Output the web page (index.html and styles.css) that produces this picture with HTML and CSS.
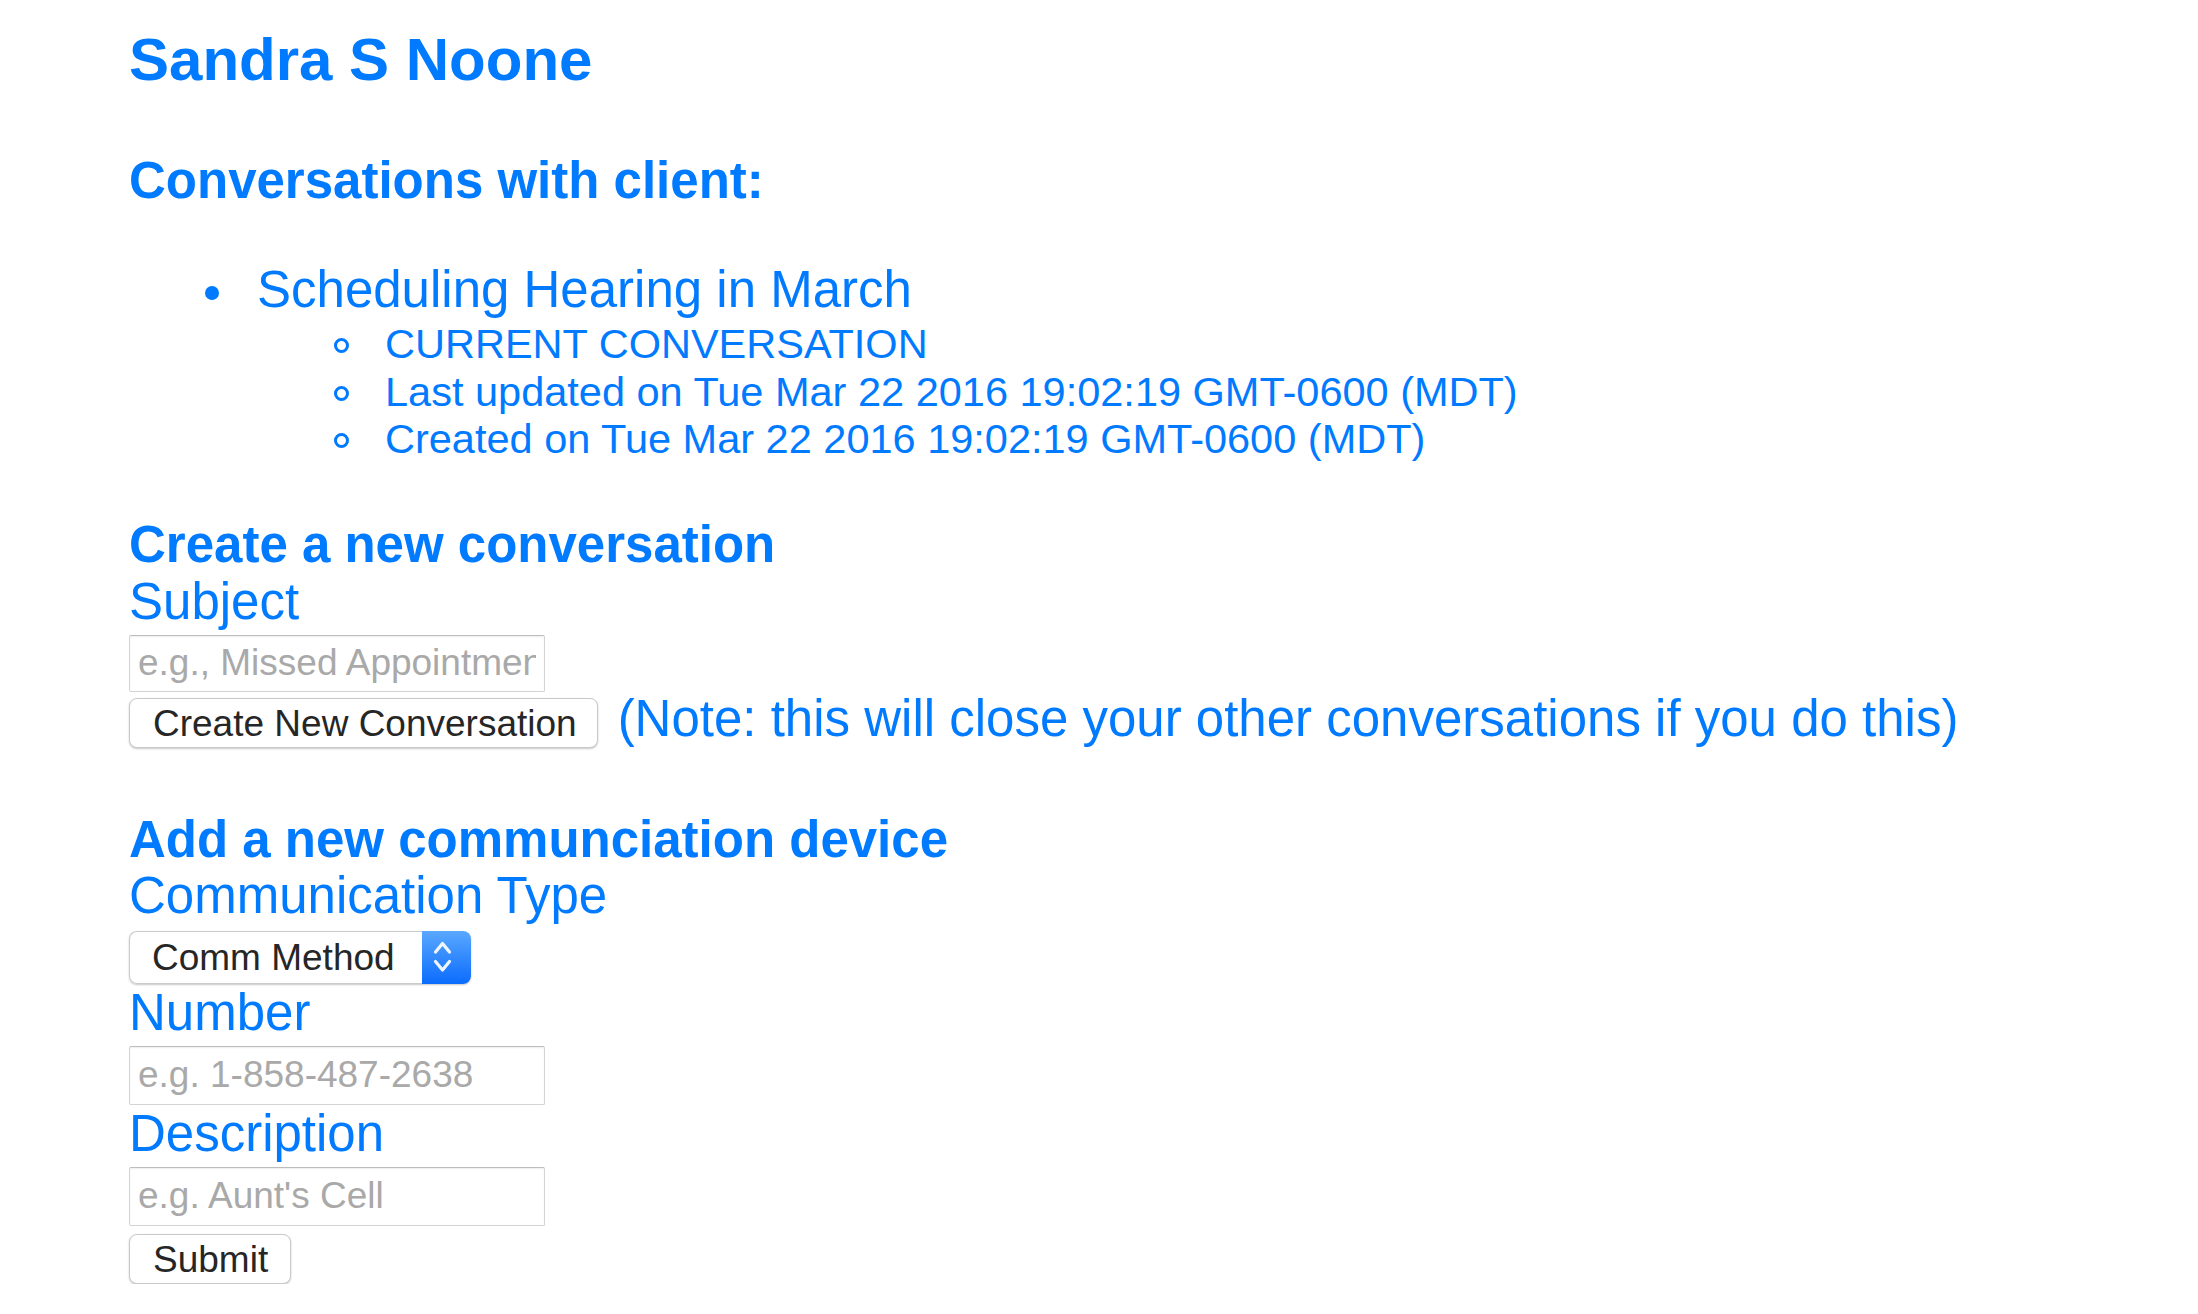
FILE: index.html
```html
<!DOCTYPE html>
<html lang="en">
<head>
<meta charset="utf-8">
<title>Sandra S Noone</title>
<link rel="stylesheet" href="styles.css">
</head>
<body>
<main class="client-page">
  <h1 class="client-name">Sandra S Noone</h1>

  <section class="conversations">
    <h3 class="section-title">Conversations with client:</h3>
    <ul class="conv-list">
      <li class="conv-item">
        <span class="conv-subject">Scheduling Hearing in March</span>
        <ul class="conv-meta">
          <li class="conv-meta-item">CURRENT CONVERSATION</li>
          <li class="conv-meta-item">Last updated on Tue Mar 22 2016 19:02:19 GMT-0600 (MDT)</li>
          <li class="conv-meta-item">Created on Tue Mar 22 2016 19:02:19 GMT-0600 (MDT)</li>
        </ul>
      </li>
    </ul>
  </section>

  <form class="new-conversation">
    <h3 class="section-title">Create a new conversation</h3>
    <label class="field-label" for="subject">Subject</label>
    <input class="text-input" id="subject" type="text" placeholder="e.g., Missed Appointment">
    <div class="action-row">
      <button type="button" class="btn">Create New Conversation</button>
      <span class="note">(Note: this will close your other conversations if you do this)</span>
    </div>
  </form>

  <form class="new-device">
    <h3 class="section-title">Add a new communciation device</h3>
    <label class="field-label" for="comm-type">Communication Type</label>
    <div class="select-box">
      <select class="select" id="comm-type">
        <option>Comm Method</option>
      </select>
      <span class="select-arrow">
        <svg width="49" height="53" viewBox="0 0 49 53" aria-hidden="true">
          <polyline points="13.5,21 20.5,12.5 27.5,21" fill="none" stroke="#fff" stroke-width="3.2" stroke-linecap="round" stroke-linejoin="round" opacity="0.92"/>
          <polyline points="13.5,30.5 20.5,39 27.5,30.5" fill="none" stroke="#fff" stroke-width="3.2" stroke-linecap="round" stroke-linejoin="round" opacity="0.92"/>
        </svg>
      </span>
    </div>
    <label class="field-label" for="number">Number</label>
    <input class="text-input" id="number" type="text" placeholder="e.g. 1-858-487-2638">
    <label class="field-label" for="description">Description</label>
    <input class="text-input" id="description" type="text" placeholder="e.g. Aunt's Cell">
    <button type="button" class="btn btn-submit">Submit</button>
  </form>
</main>
</body>
</html>
```

FILE: styles.css
```css
html, body {
  margin: 0;
  padding: 0;
  background: #ffffff;
}

body {
  font-family: "Liberation Sans", Arial, Helvetica, sans-serif;
  color: #007aff;
}

.client-page {
  padding: 0 0 0 129px;
}

.client-name {
  margin: 25px 0 0;
  font-size: 60px;
  line-height: 69px;
  font-weight: bold;
}

.section-title {
  margin: 54px 0 0;
  font-size: 51px;
  line-height: 55px;
  font-weight: bold;
}

.conversations .section-title {
  margin-top: 59px;
}

.new-device .section-title {
  margin-top: 64px;
}

/* conversation list */
.conv-list {
  list-style: none;
  margin: 54px 0 0;
  padding: 0 0 0 128px;
  font-size: 51px;
  line-height: 55px;
}

.conv-subject::before {
  content: "";
  display: inline-block;
  width: 14px;
  height: 14px;
  border-radius: 50%;
  background: currentColor;
  margin-left: -52px;
  margin-right: 38px;
  vertical-align: 7px;
}

.conv-meta {
  list-style: none;
  margin: 3px 0 0;
  padding: 0 0 0 128px;
  font-size: 41.5px;
  line-height: 47.5px;
}

.conv-meta-item::before {
  content: "";
  display: inline-block;
  box-sizing: border-box;
  width: 15px;
  height: 15px;
  border-radius: 50%;
  border: 3px solid currentColor;
  margin-left: -51px;
  margin-right: 36px;
  vertical-align: 5px;
}

/* form pieces */
.field-label {
  display: block;
  margin: 0;
  font-size: 51px;
  line-height: 55px;
}

.section-title + .field-label {
  margin-top: 2px;
}

.new-device .field-label {
  margin-top: 1px;
}

.text-input {
  display: block;
  box-sizing: border-box;
  margin: 6px 0 0;
  width: 416px;
  height: 57px;
  padding: 0 8px;
  border: 1px solid #d3d3d3;
  border-top-color: #bdbdbd;
  border-radius: 2px;
  box-shadow: inset 0 1px 2px rgba(0, 0, 0, 0.07);
  background: #fff;
  font-family: "Liberation Sans", Arial, sans-serif;
  font-size: 37px;
  color: #222;
  outline: none;
}

.new-device .text-input {
  height: 59px;
}

.text-input::placeholder {
  color: #a9a9a9;
  opacity: 1;
}

.action-row {
  display: flex;
  align-items: baseline;
  gap: 20px;
  margin-top: -1px;
}

.note {
  display: block;
  font-size: 51px;
  line-height: 55px;
  white-space: nowrap;
}

.btn {
  box-sizing: border-box;
  height: 50px;
  margin: 0;
  padding: 4px 20px 2px 23px;
  border: 1px solid #c9c9c9;
  border-radius: 8px;
  background: #ffffff;
  box-shadow: 0 1px 2px rgba(0, 0, 0, 0.22);
  font-family: "Liberation Sans", Arial, sans-serif;
  font-size: 37px;
  line-height: 42px;
  color: #262626;
  white-space: nowrap;
}

.btn-submit {
  display: block;
  margin-top: 8px;
  height: 50px;
  padding-right: 22px;
}

.select-box {
  display: flex;
  margin-top: 8px;
  width: 342px;
  height: 53px;
  border-radius: 8px;
  box-shadow: 0 1px 2px rgba(0, 0, 0, 0.22);
}

.select {
  -webkit-appearance: none;
  appearance: none;
  flex: 1;
  box-sizing: border-box;
  height: 53px;
  margin: 0;
  padding: 0 0 0 22px;
  border: 1px solid #cacaca;
  border-right: none;
  border-radius: 8px 0 0 8px;
  background: #ffffff;
  font-family: "Liberation Sans", Arial, sans-serif;
  font-size: 37px;
  color: #262626;
  outline: none;
}

.select-arrow {
  display: flex;
  width: 49px;
  height: 53px;
  border-radius: 0 8px 8px 0;
  background: linear-gradient(#5aa8ff, #0b6cfd);
}
```
